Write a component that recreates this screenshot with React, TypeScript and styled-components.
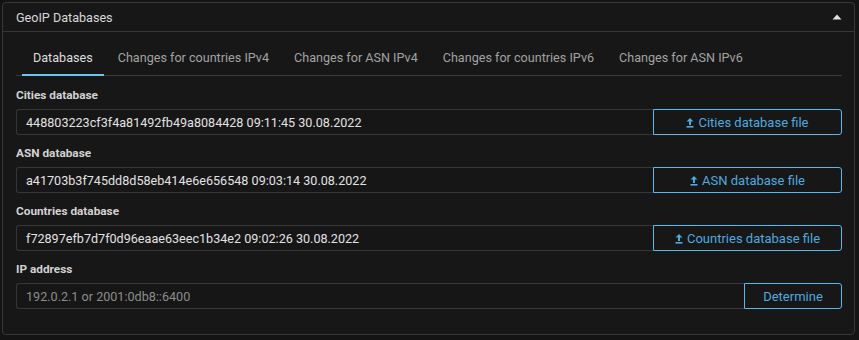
import React from "react";
import styled, { createGlobalStyle } from "styled-components";

const Global = createGlobalStyle`
  html, body { margin: 0; padding: 0; background: #141414; }
  body { font-family: Roboto, "Liberation Sans", sans-serif; font-size: 13px; color: #d6d6d6; }
  * { box-sizing: border-box; }
`;

const Page = styled.div`
  padding: 2px 4px 4px 2px;
`;

const Panel = styled.section`
  border: 1px solid #383838;
  border-radius: 4px;
  background: #171717;
`;

const Header = styled.header`
  height: 29px;
  display: flex;
  align-items: center;
  justify-content: space-between;
  padding: 0 12px 0 13px;
  border-bottom: 1px solid #363636;
  color: #d8d8d8;
  font-size: 12.6px;
`;

const Body = styled.div`
  padding: 9px 12px 25px 13px;
`;

const Tabs = styled.nav`
  display: flex;
  gap: 3px;
  padding-left: 6px;
  border-bottom: 1px solid #3a3a3a;
  margin-bottom: 10px;
`;

const Tab = styled.div<{ $active?: boolean }>`
  padding: 8px 11px 7px;
  line-height: 18px;
  font-size: 12.6px;
  margin-bottom: -1px;
  color: ${(p) => (p.$active ? "#dedede" : "#a2a2a2")};
  border-bottom: 2px solid ${(p) => (p.$active ? "#6cc4f0" : "transparent")};
`;

const Field = styled.div`
  margin-bottom: 9px;
  &:last-child { margin-bottom: 0; }
`;

const Label = styled.div`
  font-weight: 700;
  line-height: 18px;
  margin-bottom: 5px;
  color: #d2d2d2;
  font-size: 11.8px;
`;

const Row = styled.div`
  display: flex;
  height: 26px;
`;

const Input = styled.div<{ $placeholder?: boolean }>`
  flex: 1;
  display: flex;
  align-items: center;
  padding-left: 9px;
  border: 1px solid #363636;
  border-right: none;
  border-radius: 3px 0 0 3px;
  font-size: 12.6px;
  color: ${(p) => (p.$placeholder ? "#8c8c8c" : "#e2e2e2")};
  background: #161616;
`;

const Button = styled.button<{ $w: number }>`
  width: ${(p) => p.$w}px;
  display: flex;
  align-items: center;
  justify-content: center;
  gap: 4px;
  background: transparent;
  border: 1px solid #58baec;
  border-radius: 0 3px 3px 0;
  color: #4eaadf;
  font-family: Roboto, "Liberation Sans", sans-serif;
  font-size: 13px;
  padding: 0;
`;

const UploadIcon = () => (
  <svg width="8" height="11" viewBox="0 0 8 11">
    <path d="M4 1 L7.5 4.5 H5 V8 H3 V4.5 H0.5 Z" fill="#4eaadf" />
    <rect x="0.5" y="9" width="7" height="1.6" fill="#4eaadf" />
  </svg>
);

const Caret = () => (
  <svg width="10" height="6" viewBox="0 0 10 6">
    <path d="M0.5 5.5 L5 0.5 L9.5 5.5 Z" fill="#e0e0e0" />
  </svg>
);

const fields = [
  { label: "Cities database", value: "448803223cf3f4a81492fb49a8084428 09:11:45 30.08.2022", btn: "Cities database file" },
  { label: "ASN database", value: "a41703b3f745dd8d58eb414e6e656548 09:03:14 30.08.2022", btn: "ASN database file" },
  { label: "Countries database", value: "f72897efb7d7f0d96eaae63eec1b34e2 09:02:26 30.08.2022", btn: "Countries database file" },
];

const tabs = ["Databases", "Changes for countries IPv4", "Changes for ASN IPv4", "Changes for countries IPv6", "Changes for ASN IPv6"];

export default function App() {
  return (
    <Page>
      <Global />
      <Panel>
        <Header>
          <span>GeoIP Databases</span>
          <Caret />
        </Header>
        <Body>
          <Tabs>
            {tabs.map((t, i) => (
              <Tab key={t} $active={i === 0}>{t}</Tab>
            ))}
          </Tabs>
          {fields.map((f) => (
            <Field key={f.label}>
              <Label>{f.label}</Label>
              <Row>
                <Input>{f.value}</Input>
                <Button $w={189}>
                  <UploadIcon />
                  {f.btn}
                </Button>
              </Row>
            </Field>
          ))}
          <Field>
            <Label>IP address</Label>
            <Row>
              <Input $placeholder>192.0.2.1 or 2001:0db8::6400</Input>
              <Button $w={98}>Determine</Button>
            </Row>
          </Field>
        </Body>
      </Panel>
    </Page>
  );
}
